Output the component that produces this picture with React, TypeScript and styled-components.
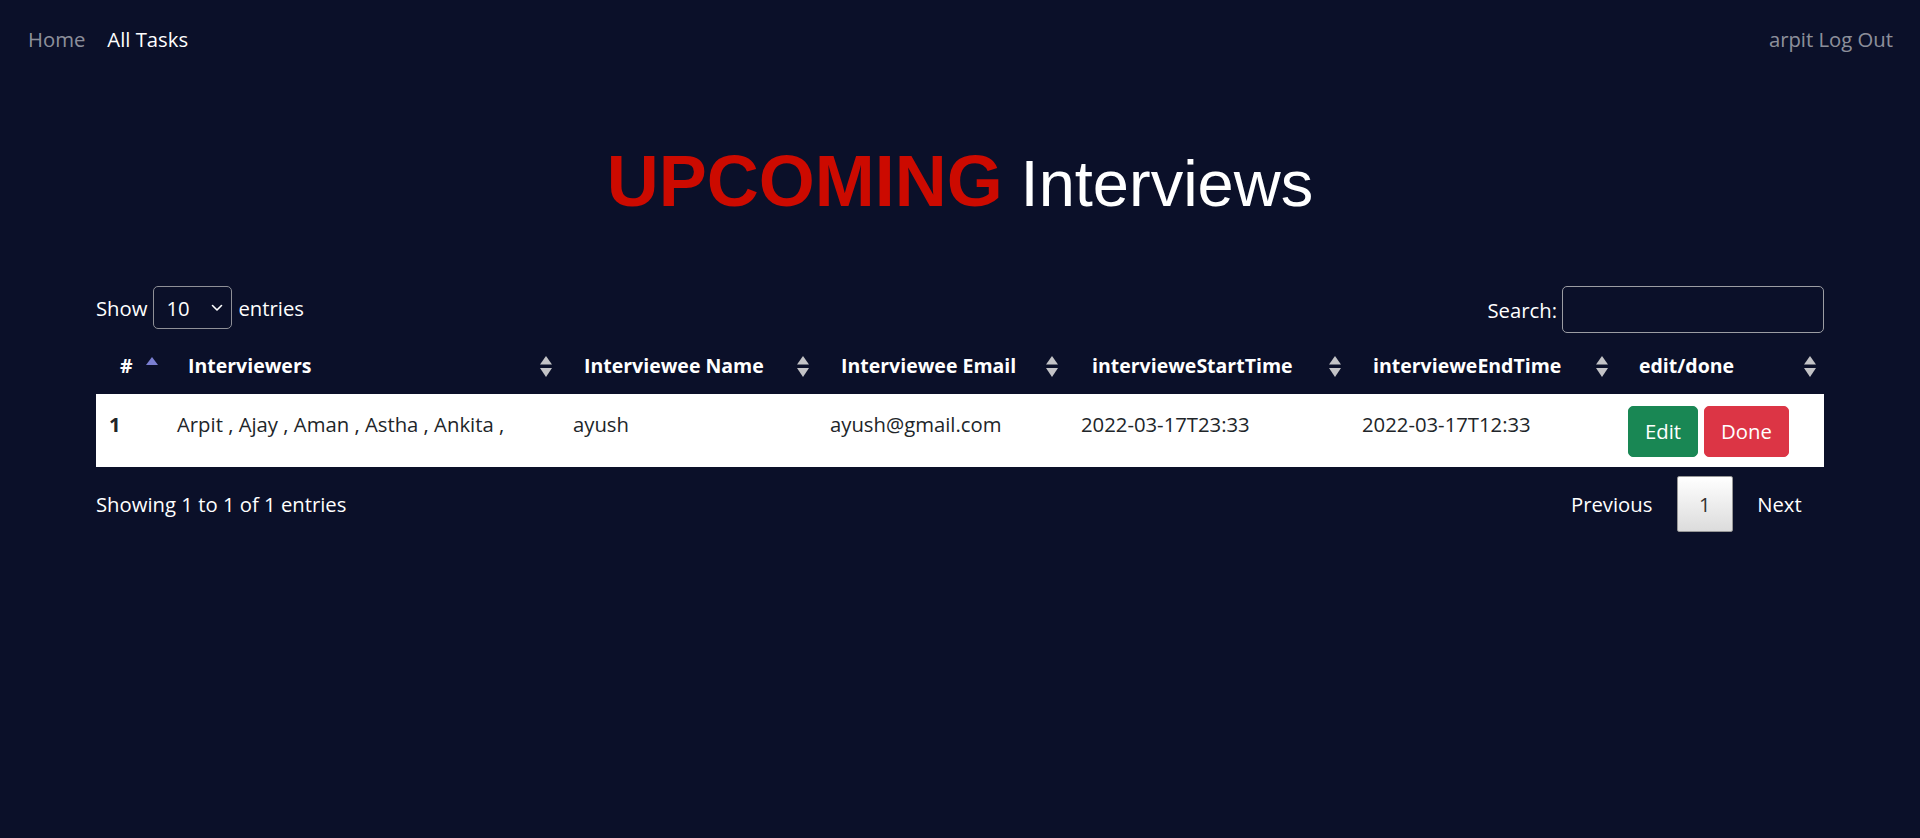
import React from "react";
import styled, { createGlobalStyle } from "styled-components";

const GlobalStyle = createGlobalStyle`
  html, body {
    margin: 0;
    padding: 0;
    background: #0b1029;
  }
  body {
    font-family: "Open Sans", "Noto Sans", sans-serif;
    color: #ffffff;
    font-size: 20.3px;
    line-height: 1.5;
  }
  * { box-sizing: border-box; }
`;

const Page = styled.div`
  min-height: 838px;
  background: #0b1029;
`;

const NavBar = styled.nav`
  height: 78px;
  display: flex;
  align-items: center;
  justify-content: space-between;
  padding: 0 27px 0 17px;
`;

const NavLinks = styled.div`
  display: flex;
`;

const NavLink = styled.a<{ $active?: boolean }>`
  padding: 0 11px;
  color: ${(p) => (p.$active ? "#ffffff" : "rgba(255,255,255,0.55)")};
  text-decoration: none;
  font-size: 20.3px;
  line-height: 32px;
`;

const NavText = styled.span`
  color: rgba(255, 255, 255, 0.55);
  font-size: 20.3px;
  line-height: 32px;
`;

const Title = styled.h1`
  margin: 61px 0 0;
  text-align: center;
  font-family: "Liberation Sans", Arial, sans-serif;
  font-weight: 400;
  font-size: 64px;
  line-height: 84px;
  height: 84px;
  white-space: nowrap;
`;

const TitleAccent = styled.span`
  color: #cc0a00;
  font-weight: 700;
  font-size: 72px;
`;

const TitleRest = styled.span`
  color: #ffffff;
  font-size: 65px;
`;

const Wrapper = styled.div`
  width: 1728px;
  margin: 63px auto 0;
`;

const Controls = styled.div`
  display: flex;
  justify-content: space-between;
  align-items: flex-start;
  height: 47px;
  margin-bottom: 7px;
`;

const ControlLabel = styled.label`
  display: inline-flex;
  align-items: center;
  font-size: 20.3px;
  line-height: 32px;
  color: #ffffff;
`;

const SelectBox = styled.span`
  display: inline-grid;
  margin: 0 6px;
`;

const Select = styled.select`
  grid-area: 1 / 1;
  appearance: none;
  -webkit-appearance: none;
  width: 79px;
  height: 43px;
  border: 1px solid #8f9097;
  border-radius: 5px;
  background: transparent;
  color: #ffffff;
  font-family: inherit;
  font-size: 20.3px;
  padding: 0 0 0 12px;
  outline: none;
`;

const Chevron = styled.svg`
  grid-area: 1 / 1;
  justify-self: end;
  align-self: center;
  margin-right: 9px;
  pointer-events: none;
`;

const SearchInput = styled.input`
  width: 262px;
  height: 47px;
  margin-left: 5px;
  border: 1px solid #9c9da3;
  border-radius: 5px;
  background: transparent;
  color: #ffffff;
  outline: none;
`;

const Table = styled.table`
  width: 100%;
  border-collapse: collapse;
  table-layout: fixed;
`;

const HeadCell = styled.th<{ $padRight?: number }>`
  padding: 10px ${(p) => p.$padRight ?? 8}px 12px 24px;
  font-size: 19.5px;
  font-weight: 700;
  line-height: 32px;
  text-align: left;
  color: #ffffff;
  white-space: nowrap;
`;

const HeadInner = styled.div`
  display: flex;
  align-items: center;
  justify-content: space-between;
`;

const BodyRow = styled.tr`
  background: #ffffff;
`;

const BodyCell = styled.td<{ $bold?: boolean }>`
  padding: 12px 13px 10px;
  vertical-align: top;
  color: #212529;
  font-size: 20.3px;
  line-height: 36px;
  font-weight: ${(p) => (p.$bold ? 700 : 400)};
  white-space: nowrap;
`;

const Actions = styled.div`
  display: flex;
  gap: 6px;
`;

const ActionButton = styled.button<{ $tone: "success" | "danger" }>`
  background: ${(p) => (p.$tone === "success" ? "#198754" : "#dc3545")};
  border: 1px solid ${(p) => (p.$tone === "success" ? "#198754" : "#dc3545")};
  color: #ffffff;
  border-radius: 5px;
  padding: 8px 16px;
  font-family: inherit;
  font-size: 20.3px;
  line-height: 33px;
  cursor: pointer;
`;

const Footer = styled.div`
  display: flex;
  justify-content: space-between;
  align-items: center;
  margin-top: 9px;
`;

const Info = styled.div`
  font-size: 20.3px;
  line-height: 32px;
`;

const Pagination = styled.div`
  display: flex;
  align-items: center;
`;

const PageButton = styled.a<{ $current?: boolean }>`
  margin-left: 2px;
  padding: 11px 21.3px;
  font-size: 20.3px;
  line-height: 32px;
  border: 1px solid ${(p) => (p.$current ? "#979797" : "transparent")};
  border-radius: 2px;
  color: ${(p) => (p.$current ? "#333333" : "#ffffff")};
  background: ${(p) =>
    p.$current ? "linear-gradient(to bottom, #ffffff 0%, #dcdcdc 100%)" : "transparent"};
  cursor: pointer;
`;

const SortIcon: React.FC<{ mode: "both" | "asc" }> = ({ mode }) => (
  <svg width="12" height="21" viewBox="0 0 12 21">
    {mode === "asc" ? (
      <polygon points="6,1 12,9 0,9" fill="#7b7fd2" />
    ) : (
      <>
        <polygon points="6,0 12,8.5 0,8.5" fill="#c3c3c6" />
        <polygon points="0,12 12,12 6,21" fill="#c3c3c6" />
      </>
    )}
  </svg>
);

const columns: { label: string; width: number; mode: "both" | "asc"; padRight: number }[] = [
  { label: "#", width: 68, mode: "asc", padRight: 6 },
  { label: "Interviewers", width: 396, mode: "both", padRight: 8 },
  { label: "Interviewee Name", width: 257, mode: "both", padRight: 8 },
  { label: "Interviewee Email", width: 251, mode: "both", padRight: 10 },
  { label: "intervieweStartTime", width: 281, mode: "both", padRight: 8 },
  { label: "intervieweEndTime", width: 266, mode: "both", padRight: 7 },
  { label: "edit/done", width: 209, mode: "both", padRight: 8 },
];

export default function App() {
  return (
    <Page>
      <GlobalStyle />
      <NavBar>
        <NavLinks>
          <NavLink href="#">Home</NavLink>
          <NavLink href="#" $active>
            All Tasks
          </NavLink>
        </NavLinks>
        <NavText>arpit Log Out</NavText>
      </NavBar>

      <Title>
        <TitleAccent>UPCOMING</TitleAccent> <TitleRest>Interviews</TitleRest>
      </Title>

      <Wrapper>
        <Controls>
          <ControlLabel>
            Show
            <SelectBox>
              <Select defaultValue="10">
                <option value="10">10</option>
                <option value="25">25</option>
                <option value="50">50</option>
                <option value="100">100</option>
              </Select>
              <Chevron width="12" height="8" viewBox="0 0 12 8">
                <path d="M1.5 1.5 L6 6 L10.5 1.5" stroke="#ffffff" strokeWidth="1.6" fill="none" strokeLinecap="round" strokeLinejoin="round" />
              </Chevron>
            </SelectBox>
            entries
          </ControlLabel>
          <ControlLabel>
            Search:
            <SearchInput type="search" />
          </ControlLabel>
        </Controls>

        <Table>
          <colgroup>
            {columns.map((c) => (
              <col key={c.label} style={{ width: c.width }} />
            ))}
          </colgroup>
          <thead>
            <tr>
              {columns.map((c) => (
                <HeadCell key={c.label} $padRight={c.padRight}>
                  <HeadInner>
                    <span>{c.label}</span>
                    <SortIcon mode={c.mode} />
                  </HeadInner>
                </HeadCell>
              ))}
            </tr>
          </thead>
          <tbody>
            <BodyRow>
              <BodyCell $bold>1</BodyCell>
              <BodyCell>Arpit , Ajay , Aman , Astha , Ankita ,</BodyCell>
              <BodyCell>ayush</BodyCell>
              <BodyCell>ayush@gmail.com</BodyCell>
              <BodyCell>2022-03-17T23:33</BodyCell>
              <BodyCell>2022-03-17T12:33</BodyCell>
              <BodyCell>
                <Actions>
                  <ActionButton $tone="success">Edit</ActionButton>
                  <ActionButton $tone="danger">Done</ActionButton>
                </Actions>
              </BodyCell>
            </BodyRow>
          </tbody>
        </Table>

        <Footer>
          <Info>Showing 1 to 1 of 1 entries</Info>
          <Pagination>
            <PageButton>Previous</PageButton>
            <PageButton $current>1</PageButton>
            <PageButton>Next</PageButton>
          </Pagination>
        </Footer>
      </Wrapper>
    </Page>
  );
}
